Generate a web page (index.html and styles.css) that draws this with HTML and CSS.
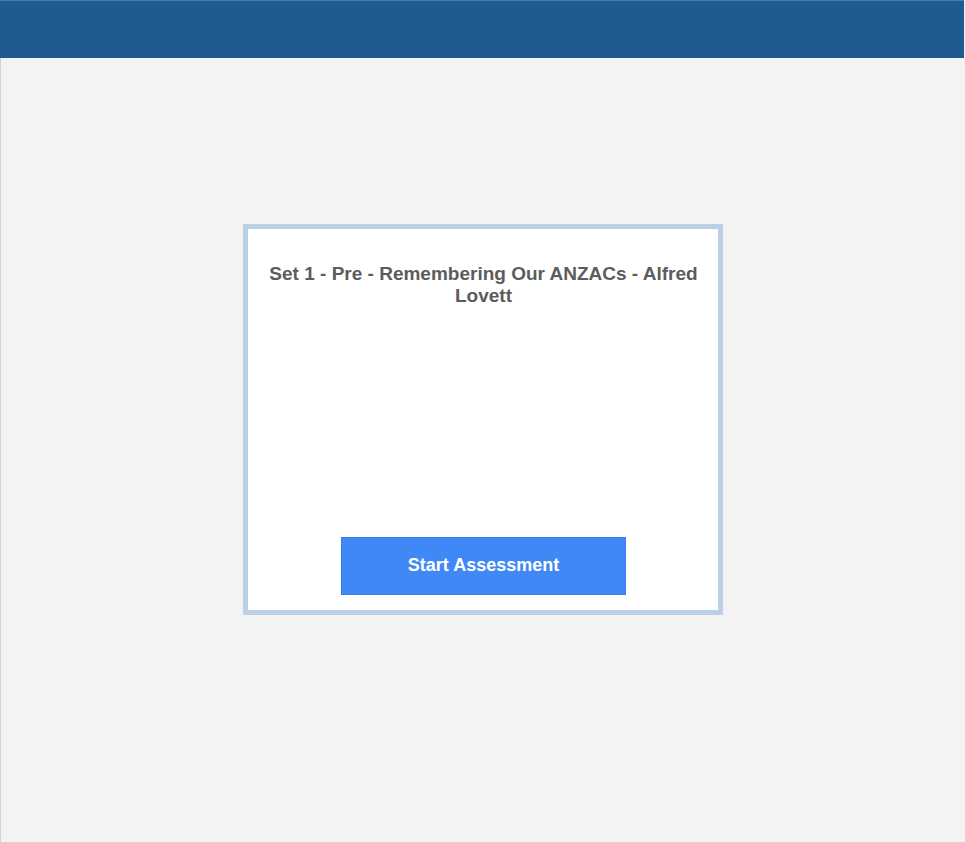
FILE: index.html
```html
<!DOCTYPE html>
<html lang="en">
<head>
    <meta charset="UTF-8">
    <meta name="viewport" content="width=device-width, initial-scale=1.0">
    <title>Assessment</title>
    <link rel="stylesheet" href="styles.css">
</head>
<body>
    <header class="top-bar"></header>
    <main class="page">
        <div class="intro-card">
            <h2 class="intro-title">Set 1 - Pre - Remembering Our ANZACs - Alfred Lovett</h2>
            <button class="start-button">Start Assessment</button>
        </div>
    </main>
</body>
</html>
```

FILE: styles.css
```css
/* styles.css */
html, body {
    height: 100%;
}

body {
    margin: 0;
    background-color: #f3f3f3;
    font-family: "Liberation Sans", Arial, sans-serif;
    display: flex;
    flex-direction: column;
}

.top-bar {
    height: 57px;
    margin-right: 1px;
    background-color: #1f5b8e;
    border-top: 1px solid #4c7aa3;
    flex-shrink: 0;
}

.page {
    flex: 1;
    border-left: 1px solid #d2d2d2;
    display: flex;
    justify-content: center;
    align-items: flex-start;
    padding-top: 166px;
}

.intro-card {
    box-sizing: border-box;
    width: 480px;
    height: 391px;
    background-color: white;
    border: 5px solid #bbcfe7;
    display: flex;
    flex-direction: column;
    align-items: center;
    padding: 0 18px 15px 19px;
}

.intro-title {
    margin: 34px 0 0;
    font-size: 19px;
    line-height: 22px;
    font-weight: bold;
    color: #5c5c5c;
    text-align: center;
}

.start-button {
    margin-top: auto;
    width: 285px;
    height: 58px;
    padding: 0 0 2px;
    background-color: #4088f5;
    border: 1px solid #3a7fe9;
    color: white;
    font-family: "Liberation Sans", Arial, sans-serif;
    font-size: 18px;
    font-weight: bold;
    cursor: pointer;
}
```
